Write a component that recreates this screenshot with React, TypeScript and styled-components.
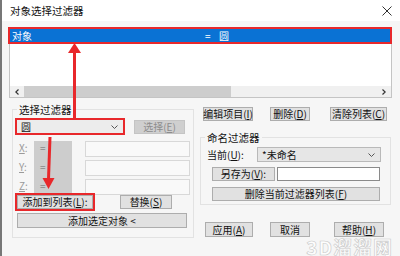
import React from 'react'
import styled, { createGlobalStyle } from 'styled-components'

const GlobalStyle = createGlobalStyle`
  html, body {
    margin: 0;
    padding: 0;
  }
  body {
    font-family: "Noto Sans CJK SC", "Liberation Sans", sans-serif;
    font-size: 10px;
    color: #111;
    background: #f6f6f6;
  }
`

const Dialog = styled.div`
  position: relative;
  width: 400px;
  height: 256px;
  box-sizing: border-box;
  border-left: 2px solid #777;
  background: #f6f6f6;
  overflow: hidden;
  display: flex;
  flex-direction: column;
`

const TitleBar = styled.div`
  height: 21px;
  flex: none;
  background: #fff;
  display: flex;
  align-items: center;
  justify-content: space-between;
  padding: 0 8px;
  font-size: 10.5px;
  line-height: 12px;
`

const ListBox = styled.div`
  margin: 6px 8px 0 7px;
  height: 71px;
  box-sizing: border-box;
  border: 1px solid #c4c4c4;
  background: #fff;
  display: flex;
  flex-direction: column;
`

const Rows = styled.div`
  flex: 1;
  padding-top: 1px;
`

const SelectedRow = styled.div`
  height: 13px;
  margin-right: 1px;
  background: #0a72d4;
  color: #fff;
  outline: 2px solid #e8282b;
  display: grid;
  grid-template-columns: 193px 14px auto;
  line-height: 13px;
  padding-left: 2px;
`

const HScroll = styled.div`
  height: 11px;
  background: #f0f0f0;
  display: flex;
  align-items: center;
`

const ScrollArrow = styled.div`
  width: 14px;
  height: 11px;
  display: flex;
  align-items: center;
  justify-content: center;
`

const Track = styled.div`
  flex: 1;
  height: 11px;
  display: flex;
`

const Thumb = styled.div`
  width: 207px;
  background: #cdcdcd;
`

const Main = styled.div`
  display: grid;
  grid-template-columns: 185px 192px;
  column-gap: 5px;
  padding: 0 8px;
  margin-top: 5px;
`

const Group = styled.fieldset<{ $pad: string }>`
  margin: 0;
  min-width: 0;
  border: 1px solid #e2e2e2;
  padding: ${p => p.$pad};
`

const Legend = styled.legend<{ $left: number }>`
  padding: 0 2px;
  margin-left: ${p => p.$left}px;
  font-size: 10.5px;
  line-height: 13px;
`

const Row = styled.div<{ $top?: number; $left?: number }>`
  display: flex;
  align-items: center;
  margin-top: ${p => p.$top || 0}px;
  margin-left: ${p => p.$left || 0}px;
`

const Combo = styled.div<{ $w: number; $h: number; $hot?: boolean }>`
  width: ${p => p.$w}px;
  height: ${p => p.$h}px;
  box-sizing: border-box;
  border: ${p => (p.$hot ? '2px solid #e8282b' : '1px solid #b9b9b9')};
  background: ${p => (p.$hot ? '#ececec' : '#e6e6e6')};
  display: flex;
  align-items: center;
  justify-content: space-between;
  padding: 0 5px 0 4px;
  line-height: 12px;
`

const Btn = styled.div<{ $w: number; $h?: number; $left?: number; $hot?: boolean; $off?: boolean }>`
  width: ${p => p.$w}px;
  height: ${p => p.$h || 14}px;
  margin-left: ${p => p.$left || 0}px;
  box-sizing: border-box;
  border: 1px solid ${p => (p.$off ? '#c4c4c4' : '#adadad')};
  background: ${p => (p.$off ? '#cfcfcf' : '#e1e1e1')};
  color: ${p => (p.$off ? '#8d8d8d' : '#111')};
  outline: ${p => (p.$hot ? '2px solid #e8282b' : 'none')};
  display: flex;
  align-items: center;
  justify-content: center;
  line-height: 12px;
  white-space: nowrap;
  flex: none;
`

const CoordRows = styled.div`
  margin-top: 6px;
  padding-left: 4px;
`

const CoordRow = styled.div`
  display: flex;
  height: 19px;
  &:last-child {
    height: 16px;
  }
`

const CoordLabel = styled.div`
  width: 15px;
  color: #9a9a9a;
  line-height: 14px;
`

const OpBox = styled.div`
  width: 38px;
  background: #cdcdcd;
  color: #8a8a8a;
  padding-left: 6px;
  box-sizing: border-box;
  line-height: 14px;
`

const CoordInput = styled.div`
  width: 105px;
  height: 16px;
  margin-left: 13px;
  box-sizing: border-box;
  border: 1px solid #d8d8d8;
  background: #f9f9f9;
`

const FieldLabel = styled.div`
  width: 50px;
  padding-left: 6px;
  line-height: 12px;
`

const TextInput = styled.div<{ $w: number }>`
  width: ${p => p.$w}px;
  height: 14px;
  margin-left: 2px;
  box-sizing: border-box;
  border: 1px solid #8a8a8a;
  background: #fff;
`

const Watermark = styled.div`
  position: absolute;
  right: 7px;
  bottom: 1px;
  font-family: "Noto Sans CJK SC", "DejaVu Sans", sans-serif;
  font-size: 19px;
  line-height: 17px;
  font-weight: 700;
  color: rgba(255, 255, 255, 0.9);
  -webkit-text-stroke: 0.6px #c9c9c9;
  letter-spacing: 1px;
`

const Overlay = styled.svg`
  position: absolute;
  left: -2px;
  top: 0;
  pointer-events: none;
`

const Chevron = ({ size = 7 }: { size?: number }) => (
  <svg width={size} height={4} viewBox="0 0 7 4">
    <path d="M0.5 0.5 L3.5 3.5 L6.5 0.5" fill="none" stroke="#555" strokeWidth="1" />
  </svg>
)

export default function App() {
  return (
    <>
      <GlobalStyle />
      <Dialog>
        <TitleBar>
          <span>对象选择过滤器</span>
          <svg width={10} height={10} viewBox="0 0 10 10">
            <path d="M0.5 0.5 L9.5 9.5 M9.5 0.5 L0.5 9.5" stroke="#333" strokeWidth="1" />
          </svg>
        </TitleBar>

        <ListBox>
          <Rows>
            <SelectedRow>
              <span>对象</span>
              <span>=</span>
              <span>圆</span>
            </SelectedRow>
          </Rows>
          <HScroll>
            <ScrollArrow>
              <svg width={4} height={6} viewBox="0 0 4 6">
                <path d="M3.5 0.5 L0.8 3 L3.5 5.5" fill="none" stroke="#333" strokeWidth="1.2" />
              </svg>
            </ScrollArrow>
            <Track>
              <Thumb />
            </Track>
            <ScrollArrow>
              <svg width={4} height={6} viewBox="0 0 4 6">
                <path d="M0.5 0.5 L3.2 3 L0.5 5.5" fill="none" stroke="#333" strokeWidth="1.2" />
              </svg>
            </ScrollArrow>
          </HScroll>
        </ListBox>

        <Main>
          <Group $pad="0 0 9px 2px" style={{ marginLeft: 2, width: 182, boxSizing: 'border-box' }}>
            <Legend $left={2}>选择过滤器</Legend>
            <Row $top={2}>
              <Combo $w={110} $h={17} $hot>
                <span>圆</span>
                <Chevron />
              </Combo>
              <Btn $w={51} $left={9} $off>
                选择(<u>E</u>)
              </Btn>
            </Row>
            <CoordRows>
              {['X', 'Y', 'Z'].map(k => (
                <CoordRow key={k}>
                  <CoordLabel>
                    <u>{k}</u>:
                  </CoordLabel>
                  <OpBox>=</OpBox>
                  <CoordInput />
                </CoordRow>
              ))}
            </CoordRows>
            <Row>
              <Btn $w={76} $left={2} $hot>
                添加到列表(<u>L</u>):
              </Btn>
              <Btn $w={52} $left={27}>
                替换(<u>S</u>)
              </Btn>
            </Row>
            <Row $top={4}>
              <Btn $w={170} $h={15} $left={2}>
                添加选定对象 &lt;
              </Btn>
            </Row>
          </Group>

          <div>
            <Row $top={4}>
              <Btn $w={50} $left={3}>
                编辑项目(<u>I</u>)
              </Btn>
              <Btn $w={40} $left={17}>
                删除(<u>D</u>)
              </Btn>
              <Btn $w={57} $left={20}>
                清除列表(<u>C</u>)
              </Btn>
            </Row>
            <Group $pad="0 0 3px 0" style={{ marginTop: 10, width: 191, boxSizing: 'border-box' }}>
              <Legend $left={4}>命名过滤器</Legend>
              <Row $top={3}>
                <FieldLabel>
                  当前(<u>U</u>):
                </FieldLabel>
                <Combo $w={124} $h={15}>
                  <span>*未命名</span>
                  <Chevron />
                </Combo>
              </Row>
              <Row $top={5} $left={11}>
                <Btn $w={63}>
                  另存为(<u>V</u>):
                </Btn>
                <TextInput $w={103} />
              </Row>
              <Row $top={6} $left={11}>
                <Btn $w={168}>
                  删除当前过滤器列表(<u>F</u>)
                </Btn>
              </Row>
            </Group>
            <Row $top={17}>
              <Btn $w={48} $h={15} $left={5}>
                应用(<u>A</u>)
              </Btn>
              <Btn $w={40} $h={15} $left={17}>
                取消
              </Btn>
              <Btn $w={50} $h={15} $left={24}>
                帮助(<u>H</u>)
              </Btn>
            </Row>
          </div>
        </Main>

        <Watermark>3D溜溜网</Watermark>

        <Overlay width={400} height={256} viewBox="0 0 400 256">
          <path d="M74.5 118 L74.5 52" stroke="#e8282b" strokeWidth="3" />
          <polygon points="68,53 74.5,43 81,53" fill="#e8282b" />
          <path d="M50 137 L48.5 179" stroke="#e8282b" strokeWidth="3" />
          <polygon points="42.5,178 54.5,178 48.5,189" fill="#e8282b" />
        </Overlay>
      </Dialog>
    </>
  )
}
